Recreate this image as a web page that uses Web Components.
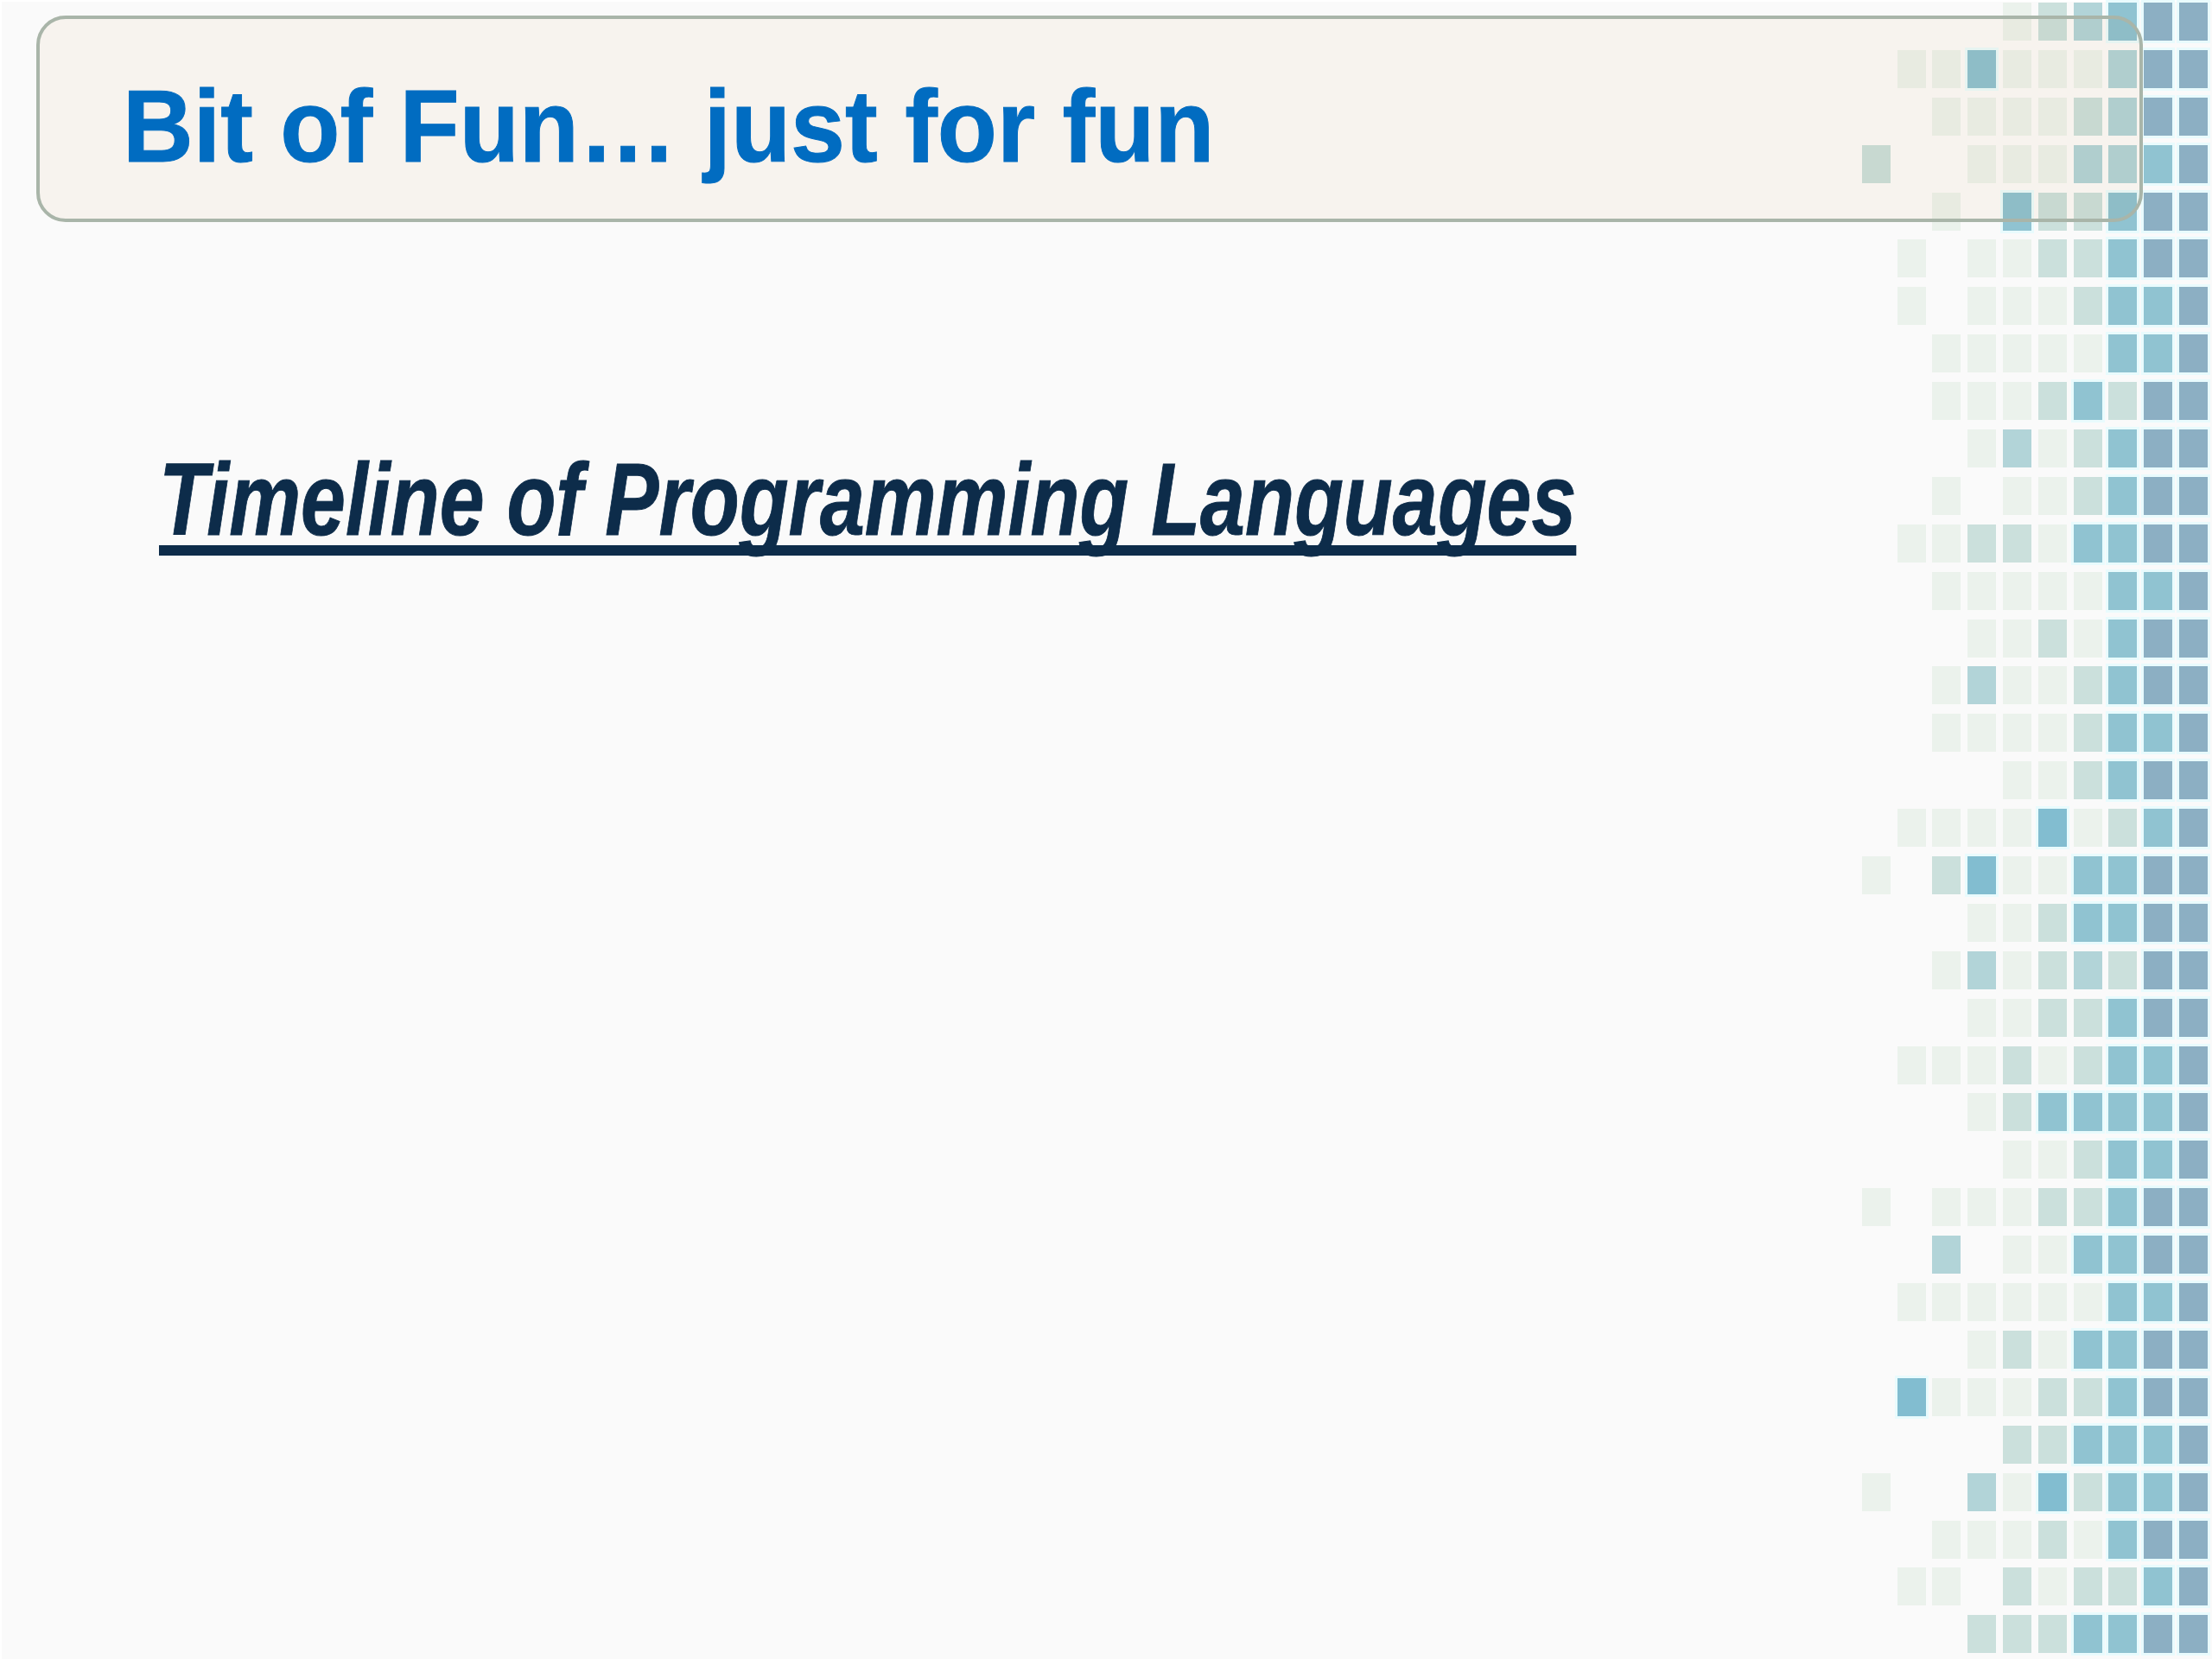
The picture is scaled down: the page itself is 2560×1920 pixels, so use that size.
<!DOCTYPE html>
<html>
<head>
<meta charset="utf-8">
<title>Bit of Fun</title>
<style>
    html, body { margin: 0; background: #fff; }
</style>
</head>
<body>
<slide-page>
    <title-bar>Bit of Fun… just for fun</title-bar>
    <sub-heading>Timeline of Programming Languages</sub-heading>
</slide-page>

<script>
class MosaicArt extends HTMLElement {

    constructor() {
        super();
        this.attachShadow({ mode: "open" });

        // one string per row, one letter per column, "." is an empty cell
        this.rows = [
            "....abqdee", ".aadaaaqee", "..aaaabqee", "b..aaaqqde", "..a.dbbdee",
            ".a.aabbdee", ".a.aaabdde", "..aaaaadde", "..aaabdbee", "...aqabdee",
            "..a.aabdee", ".aabbaddee", "..aaaaadde", "...aabadee", "..aqaabdee",
            "..aaaabdde", "....aabdee", ".aaaaDabde", "a.bDaaddee", "...aabddee",
            "..aqabqbee", "...aabbdee", ".aaababdde", "...abdddde", "....aabdde",
            "a.aaabbdee", "..q.aaddee", ".aaaaaadde", "...abaddee", ".Daaabbdee",
            "....bbddde", "a..qaDbdde", "..aaabadee", ".aa.babbde", "...bbbddee"
        ];

        const cells = this.rows.join("").split("")
            .map(letter => letter === "." ? "<i></i>" : `<i class="${letter}"></i>`)
            .join("");

        this.shadowRoot.innerHTML = `
            <style>
                :host {
                    display: grid;
                    grid-template-columns: repeat(10, 33px);
                    grid-auto-rows: 44px;
                    column-gap: 7.8px;
                    row-gap: 10.9px;
                    filter: blur(0.7px);
                }

                i { display: block; }
                .a { background: #ebf2ec; }
                .b { background: #cbe0dc; }
                .q { background: #b2d4d8; }
                .d { background: #90c3d1; box-shadow: 0 0 0 3px #e9fbfd; }
                .D { background: #82bdd0; box-shadow: 0 0 0 3px #e9fbfd; }
                .e { background: #8cafc3; box-shadow: 0 0 0 3px #e9fbfd; }
            </style>
            ${cells}
        `;
    }
}

class TitleBar extends HTMLElement {

    constructor() {
        super();
        this.attachShadow({ mode: "open" });

        this.shadowRoot.innerHTML = `
            <style>
                :host {
                    display: grid;
                    height: 239px;
                }

                .fill, .frame, .text { grid-area: 1 / 1; }

                .fill {
                    background: #fcf8f3;
                    border-radius: 34px;
                    mix-blend-mode: multiply;
                }

                /* the mosaic has a filter, so these need a z-index to stay over it */
                .frame {
                    z-index: 1;
                    border: 4px solid #a9b5a9;
                    border-radius: 34px;
                }

                .text {
                    z-index: 1;
                    align-self: center;
                    padding: 16px 0 0 100px;
                    font: bold 119px "Liberation Sans", Arial, sans-serif;
                    color: #016cc1;
                    -webkit-text-stroke: 1px #016cc1;
                    filter: blur(0.5px);
                    transform: scaleX(0.951);
                    transform-origin: 100px center;
                }
            </style>
            <div class="fill"></div>
            <div class="frame"></div>
            <div class="text"><slot></slot></div>
        `;
    }
}

class SubHeading extends HTMLElement {

    constructor() {
        super();
        this.attachShadow({ mode: "open" });

        this.shadowRoot.innerHTML = `
            <style>
                :host {
                    display: block;
                    margin: 254px 0 0 142px;
                    font: italic bold 118px/1.15 "Liberation Sans", Arial, sans-serif;
                    color: #0d2c4a;
                    -webkit-text-stroke: 1px #0d2c4a;
                    white-space: nowrap;
                    filter: blur(0.5px);
                    transform: scaleX(0.79);
                    transform-origin: left center;
                }

                span {
                    text-decoration: underline;
                    text-decoration-thickness: 12px;
                    text-underline-offset: 12px;
                    text-decoration-skip-ink: none;
                }
            </style>
            <span><slot></slot></span>
        `;
    }
}

class SlidePage extends HTMLElement {

    constructor() {
        super();
        this.attachShadow({ mode: "open" });

        this.shadowRoot.innerHTML = `
            <style>
                :host {
                    display: grid;
                    box-sizing: border-box;
                    width: 2560px;
                    height: 1920px;
                    padding: 2px 0 0 2px;
                }

                .sheet {
                    display: grid;
                    background: #fafafa;
                }

                mosaic-art {
                    grid-area: 1 / 1;
                    justify-self: end;
                    align-self: start;
                    margin: 1px 5px 0 0;
                }

                .content {
                    grid-area: 1 / 1;
                    padding: 16px 80px 0 40px;
                }
            </style>
            <div class="sheet">
                <mosaic-art></mosaic-art>
                <div class="content"><slot></slot></div>
            </div>
        `;
    }
}

customElements.define("mosaic-art", MosaicArt);
customElements.define("title-bar", TitleBar);
customElements.define("sub-heading", SubHeading);
customElements.define("slide-page", SlidePage);
</script>
</body>
</html>
